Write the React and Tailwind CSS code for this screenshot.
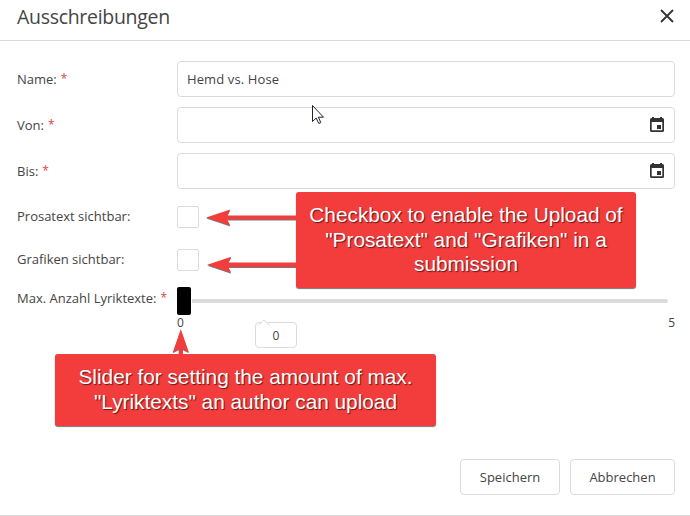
import React from "react";

function CalendarIcon() {
  return (
    <svg className="h-4 w-4" viewBox="0 0 16 16" fill="none">
      <path
        fill="#333"
        fillRule="evenodd"
        d="M3 0h2v1h6V0h2v1h.5A1.500 1.500 0 0 1 15 2.500v11a1.500 1.500 0 0 1-1.500 1.500h-11A1.500 1.500 0 0 1 1 13.500v-11A1.500 1.500 0 0 1 2.500 1H3zM2.700 5v8.300h10.600V5zM8 8h4v4H8z"
      />
    </svg>
  );
}

function Label({ children, required, className = "" }) {
  return (
    <div className={`w-40 shrink-0 whitespace-nowrap ${className}`}>
      {children}
      {required && <span className="ml-1 align-[1px] text-[12px] leading-none text-[#e0423f]">*</span>}
    </div>
  );
}

function Field({ label, value, calendar }) {
  return (
    <div className="flex h-9 items-center">
      <Label required>{label}</Label>
      <div className="flex h-9 flex-1 items-center justify-between rounded border border-[#dbdbdb] pr-[9px] pl-[9px]">
        <span className="tracking-[0.12px]">{value}</span>
        {calendar && <CalendarIcon />}
      </div>
    </div>
  );
}

function Check({ label }) {
  return (
    <div className="flex h-[22px] items-center">
      <Label className="-mt-[3px]">{label}</Label>
      <div className="size-[22px] rounded-xs border border-[#dbdbdb]" />
    </div>
  );
}

const callout =
  "absolute rounded-[3px] bg-[#f33c3c] text-center font-['Liberation_Sans',Arial,sans-serif] text-[20.800px] leading-[24.500px] whitespace-nowrap text-white shadow-[0_1px_1px_#777] [text-shadow:1px_1px_1px_#0009]";

export default function App() {
  return (
    <div className="relative h-[516px] w-[690px] overflow-hidden border-b border-[#dbdbdb] bg-white font-['Open_Sans','Noto_Sans',sans-serif] text-[13px] leading-5 text-[#444]">
      <header className="flex h-[41px] items-start justify-between border-b border-[#dbdbdb] pr-4 pl-[17px]">
        <h1 className="pt-1 text-[19.500px] leading-[26px] tracking-[-0.3px] text-[#444]">Ausschreibungen</h1>
        <svg className="mt-[9px] h-[14px] w-[14px]" viewBox="0 0 14 14" fill="none" stroke="#333" strokeWidth="1.8">
          <path d="M1 1l12 12M13 1L1 13" />
        </svg>
      </header>

      <main className="flex flex-col pt-5 pr-[15px] pl-[17px]">
        <div className="flex flex-col gap-2.5">
          <Field label="Name:" value="Hemd vs. Hose" />
          <Field label="Von:" calendar />
          <Field label="Bis:" calendar />
        </div>
        <div className="mt-[17px] flex flex-col gap-[21px]">
          <Check label="Prosatext sichtbar:" />
          <Check label="Grafiken sichtbar:" />
        </div>
        <div className="mt-4 flex h-[172px]">
          <Label required className="pt-px">Max. Anzahl Lyriktexte:</Label>
          <div className="flex-1">
            <div className="flex h-7 items-center pr-[7px]">
              <div className="h-7 w-[14px] rounded-xs bg-black" />
              <div className="ml-px h-1 flex-1 rounded-r-xs bg-[#dbdbdb]" />
            </div>
            <div className="flex justify-between text-[12px] leading-[15px]">
              <span>0</span>
              <span>5</span>
            </div>
          </div>
        </div>
        <div className="flex justify-end gap-2.5">
          <button className="h-9 w-[100px] rounded border border-[#dbdbdb]">Speichern</button>
          <button className="h-9 w-[105px] rounded border border-[#dbdbdb]">Abbrechen</button>
        </div>
      </main>

      <div className="absolute top-[322px] left-[255px] h-[26px] w-[42px] rounded border border-[#dbdbdb] bg-white text-center text-[12px] leading-[25px]">
        0
        <svg className="absolute -top-1 left-px h-[7px] w-[14px]" viewBox="0 0 14 7">
          <path d="M1 6.500L7 1l6 5.500" fill="#fff" stroke="#dbdbdb" />
        </svg>
      </div>

      <svg
        className="absolute inset-0 h-full w-full drop-shadow-[0_1px_0.5px_#777]"
        viewBox="0 0 690 516"
        fill="#f33c3c"
      >
        <path d="M206 218l24-8-3 6h71v4h-71l3 6z" />
        <path d="M207 265.300l24-8-3 5.700h70v4.500h-70l3 5.800z" />
        <path d="M180.500 330l8 23-6-3v6h-4v-6l-6 3z" />
      </svg>

      <div className={`${callout} top-[192px] left-[296px] h-[96px] w-[340px] pt-[11px]`}>
        <div>Checkbox to enable the Upload of</div>
        <div>"Prosatext" and "Grafiken" in a</div>
        <div>submission</div>
      </div>
      <div className={`${callout} top-[354px] left-[55px] h-[72px] w-[381px] pt-[11px]`}>
        <div>Slider for setting the amount of max.</div>
        <div>"Lyriktexts" an author can upload</div>
      </div>

      <svg className="absolute top-[104px] left-[311px] h-[21px] w-[14px]" viewBox="0 0 14 21">
        <path d="M1.500 1.500v16l3.700-3.500 2.600 5.500 2-.9-2.400-5.400h5.100z" fill="#fff" stroke="#223" />
      </svg>
    </div>
  );
}
